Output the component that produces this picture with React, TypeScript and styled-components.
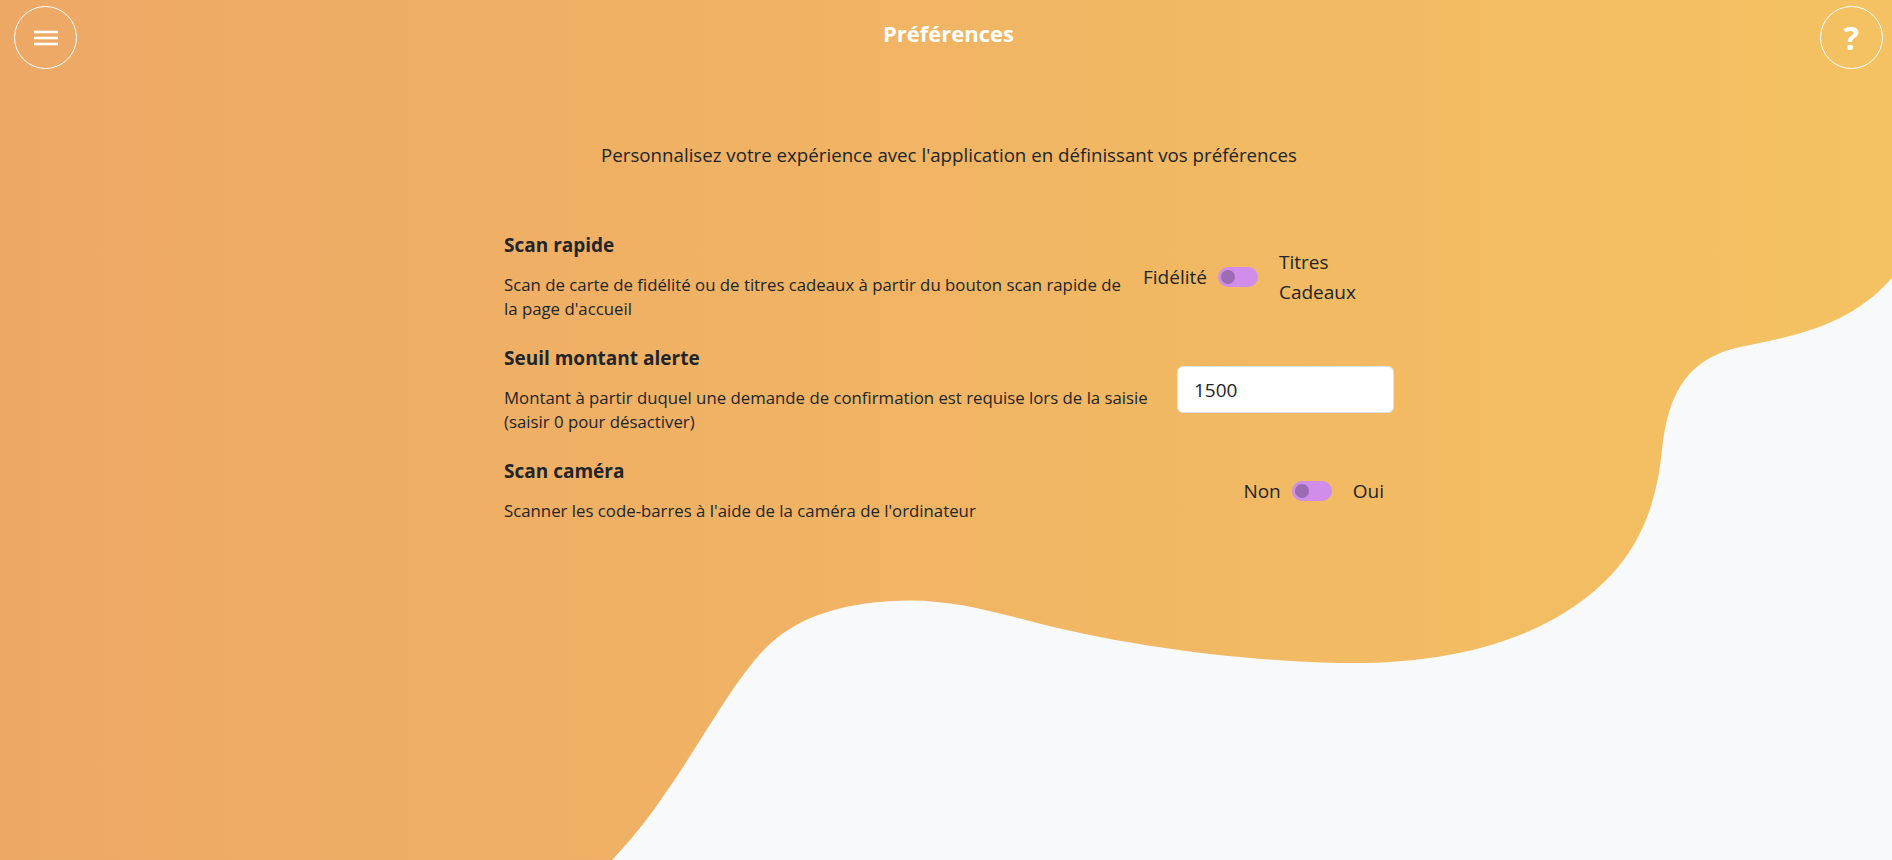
import React, { useState } from "react";
import styled, { createGlobalStyle } from "styled-components";

const GlobalStyle = createGlobalStyle`
  html, body {
    margin: 0;
    padding: 0;
  }
  body {
    background: #f8f9fa;
    font-family: "Open Sans", "Noto Sans", sans-serif;
    color: #212529;
  }
  * {
    box-sizing: border-box;
  }
`;

const Page = styled.div`
  position: relative;
  min-height: 100vh;
  overflow: hidden;
  padding-left: 6px;
`;

const Blob = styled.svg`
  position: absolute;
  inset: 0;
  width: 100%;
  height: 100%;
  z-index: 0;
`;

const Content = styled.div`
  position: relative;
  z-index: 1;
`;

const Header = styled.header`
  display: flex;
  align-items: flex-start;
  padding: 6px 9px 0 8px;
`;

const RoundButton = styled.button`
  width: 63px;
  height: 63px;
  flex-shrink: 0;
  border-radius: 50%;
  border: 1px solid #fff;
  background: transparent;
  color: #fff;
  display: flex;
  align-items: center;
  justify-content: center;
  padding: 0;
  cursor: pointer;
  font-family: inherit;
  font-size: 32px;
  font-weight: 700;
`;

const Title = styled.h1`
  flex: 1;
  margin: 13px 0 0;
  text-align: center;
  font-size: 22px;
  line-height: 29px;
  font-weight: 700;
  color: #fff;
`;

const Intro = styled.p`
  margin: 72px 0 0;
  text-align: center;
  font-size: 18.7px;
  line-height: 27px;
`;

const Settings = styled.section`
  width: 890px;
  margin: 64px auto 0;
  display: flex;
  flex-direction: column;
  gap: 24px;
`;

const Row = styled.div`
  display: flex;
  align-items: center;
  gap: 8px;
`;

const RowText = styled.div`
  flex: 1 1 0;
  min-width: 0;
`;

const RowControl = styled.div<{ $width: number }>`
  flex: 0 0 ${(p) => p.$width}px;
  display: flex;
  align-items: center;
  justify-content: flex-end;
`;

const RowTitle = styled.h5`
  margin: 0 0 14px;
  font-size: 19px;
  line-height: 27px;
  font-weight: 700;
`;

const RowDesc = styled.p`
  margin: 0;
  font-size: 16.8px;
  line-height: 24px;
`;

const SwitchGroup = styled.div`
  flex: 1;
  display: flex;
  align-items: center;
  justify-content: flex-end;
  padding-right: 10px;
`;

const SideLabel = styled.span<{ $side: "left" | "right" }>`
  font-size: 19px;
  line-height: 30px;
  flex-shrink: ${(p) => (p.$side === "right" ? 1 : 0)};
  margin-left: ${(p) => (p.$side === "right" ? "21px" : "0")};
  margin-right: ${(p) => (p.$side === "left" ? "11px" : "0")};
`;

const Track = styled.button<{ $on: boolean }>`
  position: relative;
  width: 40px;
  height: 20px;
  flex-shrink: 0;
  border: none;
  border-radius: 10px;
  background: #d08dea;
  padding: 0;
  cursor: pointer;

  &::after {
    content: "";
    position: absolute;
    top: 3px;
    left: ${(p) => (p.$on ? "23px" : "3px")};
    width: 14px;
    height: 14px;
    border-radius: 50%;
    background: #9b6bb4;
  }
`;

const AmountInput = styled.input`
  width: 217px;
  height: 47px;
  border: 1px solid #dee2e6;
  border-radius: 6px;
  background: #fff;
  padding: 0 16px;
  font-family: inherit;
  font-size: 19px;
  color: #212529;
  outline: none;
`;

const MenuIcon = () => (
  <svg width="24" height="16" viewBox="0 0 24 16">
    <g stroke="#fff" strokeWidth="2.6">
      <line x1="0" y1="2" x2="24" y2="2" />
      <line x1="0" y1="8" x2="24" y2="8" />
      <line x1="0" y1="14" x2="24" y2="14" />
    </g>
  </svg>
);

interface SwitchProps {
  left: string;
  right: string;
}

const LabeledSwitch: React.FC<SwitchProps> = ({ left, right }) => {
  const [on, setOn] = useState(false);
  return (
    <SwitchGroup>
      <SideLabel $side="left">{left}</SideLabel>
      <Track $on={on} onClick={() => setOn(!on)} aria-label={left} />
      <SideLabel $side="right">{right}</SideLabel>
    </SwitchGroup>
  );
};

export default function App() {
  const [amount, setAmount] = useState("1500");

  return (
    <Page>
      <GlobalStyle />
      <Blob viewBox="0 0 1892 860" preserveAspectRatio="none">
        <defs>
          <linearGradient id="warm" x1="0" y1="0" x2="1" y2="0">
            <stop offset="0" stopColor="#eda866" />
            <stop offset="1" stopColor="#f4c262" />
          </linearGradient>
        </defs>
        <path
          fill="url(#warm)"
          d="M0,0 H1892 V278
             C1850,325 1800,335 1740,347
             C1690,358 1668,390 1662,450
             C1655,520 1630,565 1583,600
             C1530,640 1450,665 1339,663
             C1230,660 1120,645 1026,620
             C980,608 940,598 892,601
             C840,604 800,617 771,643
             C725,685 680,790 612,860
             H0 Z"
        />
      </Blob>
      <Content>
        <Header>
          <RoundButton aria-label="menu">
            <MenuIcon />
          </RoundButton>
          <Title>Préférences</Title>
          <RoundButton aria-label="aide">?</RoundButton>
        </Header>

        <Intro>
          Personnalisez votre expérience avec l'application en définissant vos préférences
        </Intro>

        <Settings>
          <Row>
            <RowText>
              <RowTitle>Scan rapide</RowTitle>
              <RowDesc>
                Scan de carte de fidélité ou de titres cadeaux à partir du bouton scan rapide de la
                page d'accueil
              </RowDesc>
            </RowText>
            <RowControl $width={251}>
              <LabeledSwitch left="Fidélité" right="Titres Cadeaux" />
            </RowControl>
          </Row>

          <Row>
            <RowText>
              <RowTitle>Seuil montant alerte</RowTitle>
              <RowDesc>
                Montant à partir duquel une demande de confirmation est requise lors de la saisie
                (saisir 0 pour désactiver)
              </RowDesc>
            </RowText>
            <RowControl $width={218}>
              <AmountInput
                type="text"
                value={amount}
                onChange={(e) => setAmount(e.target.value)}
              />
            </RowControl>
          </Row>

          <Row>
            <RowText>
              <RowTitle>Scan caméra</RowTitle>
              <RowDesc>Scanner les code-barres à l'aide de la caméra de l'ordinateur</RowDesc>
            </RowText>
            <RowControl $width={251}>
              <LabeledSwitch left="Non" right="Oui" />
            </RowControl>
          </Row>
        </Settings>
      </Content>
    </Page>
  );
}
